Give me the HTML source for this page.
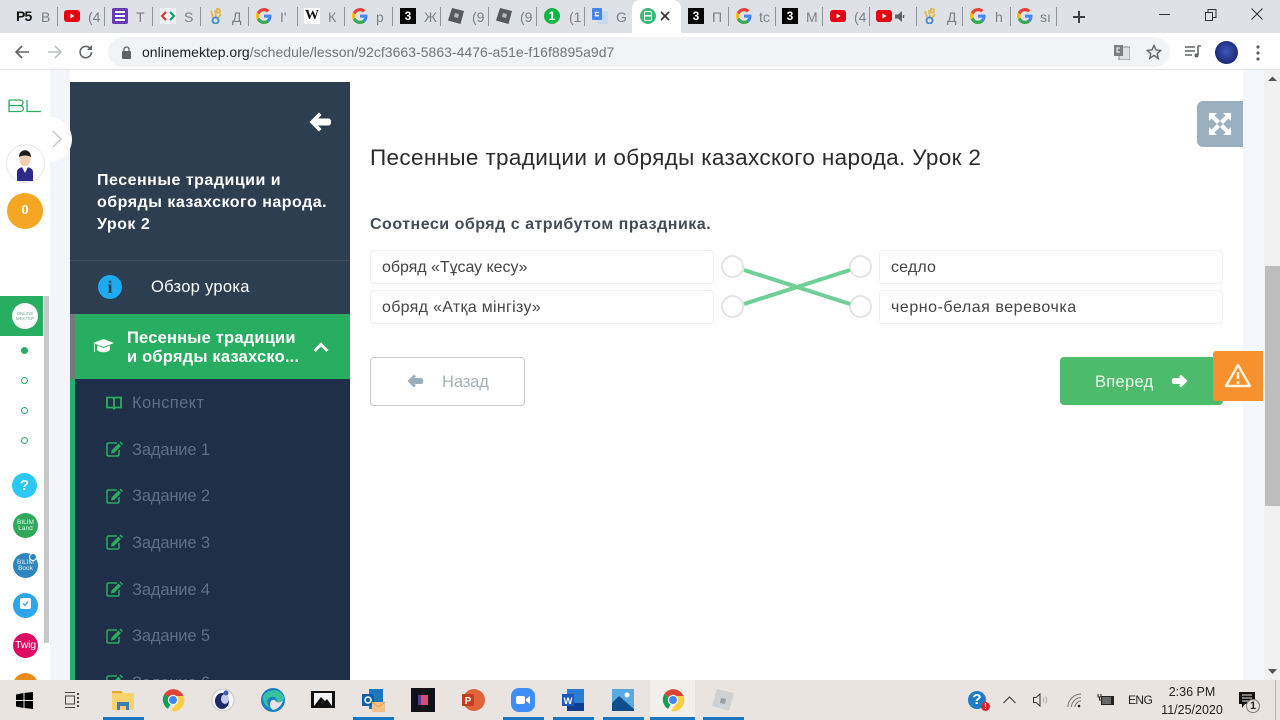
<!DOCTYPE html>
<html lang="ru"><head><meta charset="utf-8"><title>Урок</title>
<style>
html,body{margin:0;padding:0;width:1280px;height:720px;overflow:hidden;background:#fff}
body{position:relative;font-family:"Liberation Sans","Noto Sans CJK SC",sans-serif;color:#333}
.a{position:absolute;white-space:nowrap}
.r{position:absolute}
.sep{position:absolute;top:7px;width:1px;height:19px;background:#8f949a}
.tt{position:absolute;top:9px;font-size:14px;line-height:16px;color:#7b8086}
.fav{position:absolute;top:8px;width:16px;height:16px}
.b{position:absolute;background:#fff;border:1px solid #f0f0f0;border-radius:4px;box-sizing:border-box;height:34px;font-size:16px;line-height:33px;padding-left:11px;color:#444}
.m{position:absolute;left:132px;font-size:16.5px;line-height:20px;color:#5e6f85;letter-spacing:-.15px;white-space:nowrap}
.mi{position:absolute;left:105px;width:18px;height:16px}
.c{position:absolute;border-radius:50%}
.dot{position:absolute;left:21px;width:5px;height:5px;border:1px solid #27ae60;border-radius:50%;box-sizing:content-box}
.cir{position:absolute;width:19px;height:19px;border:2px solid #e4e4e4;border-radius:50%;background:#fff}
.u{position:absolute;top:717px;height:3px;background:#1a78c2}
.ti{position:absolute;top:688px;width:24px;height:24px}
</style></head><body>

<svg width="0" height="0" style="position:absolute">
<defs>
<symbol id="g" viewBox="0 0 16 16">
<path d="M15.5 8.2c0-.6-.05-1.1-.15-1.6H8v3h4.2c-.2 1-.75 1.8-1.6 2.35v2h2.6c1.5-1.4 2.3-3.4 2.3-5.75z" fill="#4285f4"/>
<path d="M8 16c2.15 0 4-.7 5.2-1.95l-2.6-2c-.7.5-1.6.75-2.6.75-2.05 0-3.8-1.4-4.4-3.25H.9v2.05C2.2 14.2 4.9 16 8 16z" fill="#34a853"/>
<path d="M3.6 9.55c-.3-.95-.3-2.15 0-3.1V4.4H.9c-1.2 2.3-1.2 4.9 0 7.2z" fill="#fbbc05"/>
<path d="M8 3.2c1.2 0 2.25.4 3.1 1.2l2.3-2.3C12 .8 10.15 0 8 0 4.9 0 2.2 1.8.9 4.4l2.7 2.05C4.2 4.6 5.95 3.2 8 3.2z" fill="#ea4335"/>
</symbol>
<symbol id="yt" viewBox="0 0 16 16"><rect x="0" y="2" width="16" height="12" rx="3" fill="#e60012"/><path d="M6.5 5.5l4 2.5-4 2.5z" fill="#fff"/></symbol>
<symbol id="rb" viewBox="0 0 16 16"><path d="M4 0l12 3-3.500 13L0 12.500z" fill="#565a5e"/><path d="M7 5l4 1-1 4-4-1z" fill="#b5b8ba"/></symbol>
<symbol id="dk" viewBox="0 0 16 16"><path d="M9 1c1-.5 3 0 3 2s-2 2-3 1zM3 3l2 6M7 2l1 7M13 6l-3 4" stroke="#e0b95a" stroke-width="2" fill="none"/><ellipse cx="7.500" cy="12.500" rx="3" ry="3" fill="none" stroke="#4a8fd0" stroke-width="2"/></symbol>
<symbol id="ch" viewBox="0 0 24 24">
<path d="M12 12L3.200 6.200A11 11 0 0 1 22.600 8H12z" fill="#db4437"/>
<path d="M12 12l-5 8.900A11 11 0 0 1 3.200 6.200z" fill="#0f9d58"/>
<path d="M12 8h10.600A11 11 0 0 1 10 23l6-8z" fill="#ffcd40"/>
<circle cx="12" cy="12" r="5.200" fill="#fff"/><circle cx="12" cy="12" r="4" fill="#4285f4"/>
</symbol>
<symbol id="ed" viewBox="0 0 18 16"><path d="M12 2H3.500C2.500 2 2 2.500 2 3.500v10c0 1 .5 1.500 1.500 1.500h9c1 0 1.500-.5 1.500-1.500V9" fill="none" stroke="#27ae60" stroke-width="1.500"/><path d="M6.500 9.500L13.500 2.500l2.500 2.500-7 7-3 .5zM14.500 1.500l1-1 2.500 2.500-1 1z" fill="#27ae60"/></symbol>
</defs>
</svg>

<!-- Tab strip -->
<div class="r" style="left:0;top:0;width:1280px;height:33px;background:#dee1e6"></div>
<div class="r" style="left:632px;top:0;width:49px;height:33px;background:#fff;border-radius:8px 8px 0 0"></div>

<div class="a" style="left:16px;top:8px;font-size:14px;line-height:17px;font-weight:bold;color:#111;letter-spacing:-.8px">P5</div><div class="tt" style="left:41px">В</div><div class="sep" style="left:57px"></div>
<svg class="fav" style="left:64px"><use href="#yt"/></svg><div class="tt" style="left:88px">(4</div><div class="sep" style="left:104px"></div>
<svg class="fav" style="left:112px" viewBox="0 0 16 16"><rect width="16" height="16" rx="2" fill="#673ab7"/><path d="M3 4h10M3 8h10M3 12h10" stroke="#fff" stroke-width="2"/></svg><div class="tt" style="left:136px">Т</div><div class="sep" style="left:152px"></div>
<svg class="fav" style="left:160px" viewBox="0 0 16 16"><rect width="16" height="16" fill="#eef0f2"/><path d="M6 4L2 8l4 4" stroke="#d93025" stroke-width="2" fill="none"/><path d="M10 4l4 4-4 4" stroke="#0f9d58" stroke-width="2" fill="none"/></svg><div class="tt" style="left:184px">S</div><div class="sep" style="left:200px"></div>
<svg class="fav" style="left:208px"><use href="#dk"/></svg><div class="tt" style="left:232px">Д</div><div class="sep" style="left:248px"></div>
<svg class="fav" style="left:256px"><use href="#g"/></svg><div class="tt" style="left:280px">I'</div><div class="sep" style="left:297px"></div>
<div class="a" style="left:304px;top:8px;width:16px;height:16px;background:#fff;font:bold 14px/16px 'Liberation Serif',serif;color:#111;text-align:center">W</div><div class="tt" style="left:328px">К</div><div class="sep" style="left:344px"></div>
<svg class="fav" style="left:352px"><use href="#g"/></svg><div class="tt" style="left:376px">р</div><div class="sep" style="left:392px"></div>
<div class="a" style="left:400px;top:8px;width:16px;height:16px;background:#000;color:#fff;font-size:12px;font-weight:bold;line-height:16px;text-align:center">3</div><div class="tt" style="left:424px">Ж</div><div class="sep" style="left:440px"></div>
<svg class="fav" style="left:448px"><use href="#rb"/></svg><div class="tt" style="left:472px">(9</div><div class="sep" style="left:488px"></div>
<svg class="fav" style="left:496px"><use href="#rb"/></svg><div class="tt" style="left:520px">(9</div><div class="sep" style="left:536px"></div>
<div class="a" style="left:544px;top:8px;width:16px;height:16px;border-radius:50%;background:#12b347;color:#fff;font-size:12px;font-weight:bold;line-height:16px;text-align:center">1</div><div class="tt" style="left:569px">(1</div><div class="sep" style="left:584px"></div>
<svg class="fav" style="left:592px" viewBox="0 0 16 16"><rect x="6" y="3" width="10" height="13" rx="1" fill="#c5d9f7"/><rect width="10" height="12" rx="1" fill="#4285f4"/><path d="M7 4.500H3.500v3.200H7" stroke="#fff" stroke-width="1.300" fill="none"/></svg><div class="tt" style="left:616px">G</div>

<div class="a" style="left:640px;top:8px;width:16px;height:16px;border-radius:50%;background:#3cb878"></div>
<div class="a" style="left:644px;top:11px;width:6px;height:8px;border:1.500px solid #fff;border-radius:2px;background:linear-gradient(#fff,#fff) center/100% 1.500px no-repeat"></div>
<svg class="r" style="left:660px;top:11px" width="10" height="10" viewBox="0 0 10 10"><path d="M1 1l8 8M9 1L1 9" stroke="#333" stroke-width="1.600"/></svg>

<div class="a" style="left:688px;top:8px;width:16px;height:16px;background:#000;color:#fff;font-size:12px;font-weight:bold;line-height:16px;text-align:center">3</div><div class="tt" style="left:712px">П</div><div class="sep" style="left:728px"></div>
<svg class="fav" style="left:736px"><use href="#g"/></svg><div class="tt" style="left:759px">tc</div><div class="sep" style="left:775px"></div>
<div class="a" style="left:782px;top:8px;width:16px;height:16px;background:#000;color:#fff;font-size:12px;font-weight:bold;line-height:16px;text-align:center">3</div><div class="tt" style="left:806px">М</div><div class="sep" style="left:822px"></div>
<svg class="fav" style="left:830px"><use href="#yt"/></svg><div class="tt" style="left:854px">(4</div><div class="sep" style="left:869px"></div>
<svg class="fav" style="left:876px"><use href="#yt"/></svg>
<svg class="r" style="left:895px;top:11px" width="12" height="11" viewBox="0 0 12 11"><path d="M0 3.500h3L7 0v11L3 7.500H0z" fill="#5f6368"/><path d="M8.500 4v3" stroke="#5f6368" stroke-width="1.400"/></svg>
<div class="sep" style="left:916px"></div>
<svg class="fav" style="left:922px"><use href="#dk"/></svg><div class="tt" style="left:947px">Д</div><div class="sep" style="left:962px"></div>
<svg class="fav" style="left:970px"><use href="#g"/></svg><div class="tt" style="left:995px">h</div><div class="sep" style="left:1010px"></div>
<svg class="fav" style="left:1017px"><use href="#g"/></svg><div class="tt" style="left:1040px">sı</div><div class="sep" style="left:1056px"></div>

<svg class="r" style="left:1072px;top:10px" width="14" height="14" viewBox="0 0 14 14"><path d="M7 1v12M1 7h12" stroke="#3c4043" stroke-width="2"/></svg>
<svg class="r" style="left:1159px;top:14px" width="12" height="2"><rect width="11" height="1" fill="#333"/></svg>
<svg class="r" style="left:1205px;top:9px" width="12" height="12" viewBox="0 0 12 12"><path d="M.5 3.500h7v8h-7zM3 3.500v-3h8v8H7.500" fill="none" stroke="#333"/></svg>
<svg class="r" style="left:1251px;top:8px" width="12" height="12" viewBox="0 0 12 12"><path d="M.5.500l11 11M11.500.500l-11 11" stroke="#333"/></svg>

<!-- Toolbar -->
<div class="r" style="left:0;top:33px;width:1280px;height:37px;background:#fff;border-bottom:1px solid #e6e6e6;box-sizing:border-box"></div>
<svg class="r" style="left:14px;top:44px" width="16" height="16" viewBox="0 0 16 16"><path d="M15 8H2M8 2L2 8l6 6" fill="none" stroke="#5f6368" stroke-width="1.600"/></svg>
<svg class="r" style="left:47px;top:44px" width="16" height="16" viewBox="0 0 16 16"><path d="M1 8h13M8 2l6 6-6 6" fill="none" stroke="#bcc0c4" stroke-width="1.600"/></svg>
<svg class="r" style="left:78px;top:44px" width="16" height="16" viewBox="0 0 16 16"><path d="M13.500 8a5.700 5.700 0 1 1-1.700-4" fill="none" stroke="#5f6368" stroke-width="1.600"/><path d="M14 1v5H9z" fill="#5f6368"/></svg>
<div class="r" style="left:108px;top:37px;width:1062px;height:30px;background:#f1f3f4;border-radius:15px"></div>
<svg class="r" style="left:121px;top:46px" width="11" height="13" viewBox="0 0 11 13"><rect x="1" y="5" width="9" height="8" rx="1" fill="#5f6368"/><path d="M3 5V3.500a2.500 2.500 0 0 1 5 0V5" fill="none" stroke="#5f6368" stroke-width="1.300"/></svg>
<div class="a" style="left:142px;top:44px;font-size:14px;line-height:17px;color:#70757a;letter-spacing:.02px"><span style="color:#202124">onlinemektep.org</span>/schedule/lesson/92cf3663-5863-4476-a51e-f16f8895a9d7</div>
<svg class="r" style="left:1114px;top:45px" width="16" height="15" viewBox="0 0 16 15"><rect x="5" y="2" width="11" height="13" fill="#e0e0e0" stroke="#8a8a8a"/><rect width="9" height="11" fill="#7c7f82"/><path d="M6 3H3v4h3" stroke="#fff" fill="none"/></svg>
<svg class="r" style="left:1146px;top:44px" width="16" height="16" viewBox="0 0 16 16"><path d="M8 1.500l2 4.400 4.700.5-3.500 3.200 1 4.700L8 11.400l-4.200 2.900 1-4.700L1.300 6.400 6 5.900z" fill="none" stroke="#5f6368" stroke-width="1.400"/></svg>
<svg class="r" style="left:1185px;top:45px" width="16" height="14" viewBox="0 0 16 14"><path d="M0 2h10M0 6h10M0 10h7" stroke="#5f6368" stroke-width="1.400"/><path d="M13 1v9" stroke="#5f6368" stroke-width="1.600"/><circle cx="11.500" cy="10.500" r="2" fill="#5f6368"/><path d="M13 1h3" stroke="#5f6368" stroke-width="1.400"/></svg>
<div class="c" style="left:1215px;top:41px;width:23px;height:23px;background:radial-gradient(circle at 50% 45%,#3f58b8,#1a2a78 70%)"></div>
<svg class="r" style="left:1256px;top:45px" width="4" height="16"><circle cx="2" cy="2" r="1.600" fill="#5f6368"/><circle cx="2" cy="8" r="1.600" fill="#5f6368"/><circle cx="2" cy="14" r="1.600" fill="#5f6368"/></svg>

<!-- Page background -->
<div class="r" style="left:50px;top:70px;width:20px;height:610px;background:#f3f5fa"></div>
<div class="r" style="left:1243px;top:70px;width:21px;height:610px;background:#f4f7fb"></div>
<div class="r" style="left:1264px;top:70px;width:16px;height:610px;background:#f1f1f1"></div>
<div class="r" style="left:1265px;top:266px;width:15px;height:240px;background:#bdbdbd"></div>
<svg class="r" style="left:1268px;top:76px" width="9" height="6"><path d="M0 5l4.500-4.500L9 5z" fill="#555"/></svg>
<svg class="r" style="left:1268px;top:669px" width="9" height="6"><path d="M0 0l4.500 5L9 0z" fill="#555"/></svg>

<!-- Left rail -->
<div class="r" style="left:44px;top:296px;width:5px;height:347px;background:#c9c9c9"></div>
<svg class="r" style="left:8px;top:98px" width="34" height="16" viewBox="0 0 34 16"><path d="M1 2h11c4 0 4 5.500 0 5.500H1m11 0c4.500 0 4.500 6 0 6H1V2M19 2v11.500h14" fill="none" stroke="#27ae60" stroke-width="1.300"/></svg>
<div class="c" style="left:7px;top:193px;width:36px;height:36px;background:#f5a623"></div>
<div class="a" style="left:7px;top:202px;width:36px;text-align:center;color:#fff;font-size:13px;line-height:16px;font-weight:bold">0</div>
<div class="r" style="left:0;top:296px;width:43px;height:40px;background:#27ae60"></div>
<div class="c" style="left:12px;top:303px;width:26px;height:26px;background:#fff"></div>
<div class="a" style="left:12px;top:311px;width:26px;text-align:center;font-size:4.500px;line-height:5px;color:#7a9;white-space:normal">ONLINE<br>MEKTEP</div>
<div class="c" style="left:21px;top:347px;width:7px;height:7px;background:#27ae60"></div>
<div class="dot" style="top:377px"></div><div class="dot" style="top:407px"></div><div class="dot" style="top:437px"></div>
<div class="c" style="left:12px;top:473px;width:25px;height:25px;background:#29c8f6"></div>
<div class="a" style="left:12px;top:477px;width:25px;text-align:center;color:#fff;font-size:15px;line-height:17px;font-weight:bold">?</div>
<div class="c" style="left:13px;top:513px;width:25px;height:25px;background:#2fa85c"></div>
<div class="a" style="left:13px;top:520px;width:25px;text-align:center;color:#e8f5ec;font-size:6.500px;line-height:6px">BILIM<br>Land</div>
<div class="c" style="left:13px;top:553px;width:25px;height:25px;background:#2f85bd"></div>
<div class="a" style="left:13px;top:560px;width:25px;text-align:center;color:#e8f2f8;font-size:6.500px;line-height:6px">BILIM<br>Book</div>
<div class="c" style="left:29px;top:553px;width:8px;height:8px;background:#2f85bd;border:1px solid #fff;box-sizing:border-box"></div>
<div class="c" style="left:13px;top:593px;width:25px;height:25px;background:#2da4ec"></div>
<div class="r" style="left:20px;top:598px;width:11px;height:11px;background:#fff;border-radius:2px"></div>
<svg class="r" style="left:22px;top:600px" width="7" height="7" viewBox="0 0 7 7"><path d="M1 3.500l2 2 3-4" fill="none" stroke="#2da4ec" stroke-width="1.300"/></svg>
<div class="c" style="left:13px;top:633px;width:25px;height:25px;background:#dd0b63"></div>
<div class="a" style="left:13px;top:640px;width:25px;text-align:center;color:#fff;font-size:10.500px;line-height:11px;letter-spacing:-.2px">Twig</div>
<div class="c" style="left:13px;top:673px;width:25px;height:25px;background:#ea8a1c"></div>

<!-- Dark panel -->
<div class="r" style="left:70px;top:82px;width:280px;height:232px;background:#2d3e50"></div>
<div class="r" style="left:70px;top:260px;width:280px;height:1px;background:#41505f"></div>
<svg class="r" style="left:309px;top:112px" width="23" height="20" viewBox="0 0 23 20"><path d="M10 .5L.5 10l9.500 9.500 2.500-2.500-3.500-3.500H19.500c3.500 0 3.500-7 0-7H9l3.500-3.500z" fill="#fff"/></svg>
<div class="a" style="left:97px;top:170px;font-size:16px;line-height:22px;font-weight:bold;color:#fff;letter-spacing:.5px">Песенные традиции и<br>обряды казахского народа.<br>Урок 2</div>
<div class="c" style="left:98px;top:275px;width:24px;height:24px;background:#1eaaf1"></div>
<div class="a" style="left:98px;top:277px;width:24px;text-align:center;font:bold 18px/20px 'Liberation Serif',serif;color:#2d3e50">i</div>
<div class="a" style="left:151px;top:277px;font-size:16.500px;line-height:20px;color:#fff;letter-spacing:.3px">Обзор урока</div>

<div class="r" style="left:70px;top:314px;width:280px;height:366px;background:#1e2f47"></div>
<div class="r" style="left:70px;top:314px;width:5px;height:65px;background:#6f7a83"></div>
<div class="r" style="left:70px;top:379px;width:5px;height:301px;background:#27ae60"></div>
<div class="r" style="left:75px;top:314px;width:275px;height:65px;background:#27ae60"></div>
<svg class="r" style="left:93px;top:338px" width="21" height="17" viewBox="0 0 21 17"><path d="M10.500 1L21 5 10.500 9 0 5z" fill="#fff"/><path d="M4.500 8v4c3 2.500 9 2.500 12 0V8l-6 2.500zM1.500 6v8" fill="#fff" stroke="#fff" stroke-width=".8"/></svg>
<div class="a" style="left:127px;top:329px;font-size:16.500px;line-height:18.500px;font-weight:bold;color:#fff;letter-spacing:.2px">Песенные традиции<br>и обряды казахско...</div>
<svg class="r" style="left:313px;top:342px" width="16" height="11" viewBox="0 0 16 11"><path d="M1.500 9L8 2.500 14.500 9" fill="none" stroke="#fff" stroke-width="3"/></svg>

<svg class="mi" style="top:395px" viewBox="0 0 18 16"><path d="M2 2.500h5c1.500 0 2 1 2 2v10c0-1-.5-2-2-2H2zM16 2.500h-5c-1.500 0-2 1-2 2v10c0-1 .5-2 2-2h5z" fill="none" stroke="#27ae60" stroke-width="1.800"/></svg>
<div class="m" style="top:393px;letter-spacing:.4px">Конспект</div>
<svg class="mi" style="top:441px"><use href="#ed"/></svg><div class="m" style="top:440px">Задание 1</div>
<svg class="mi" style="top:488px"><use href="#ed"/></svg><div class="m" style="top:486px">Задание 2</div>
<svg class="mi" style="top:534px"><use href="#ed"/></svg><div class="m" style="top:533px">Задание 3</div>
<svg class="mi" style="top:581px"><use href="#ed"/></svg><div class="m" style="top:580px">Задание 4</div>
<svg class="mi" style="top:628px"><use href="#ed"/></svg><div class="m" style="top:626px">Задание 5</div>
<svg class="mi" style="top:674px"><use href="#ed"/></svg><div class="m" style="top:673px">Задание 6</div>

<!-- Collapse button over rail and panel edge -->
<div class="c" style="left:27px;top:117px;width:45px;height:45px;background:#fff"></div>
<svg class="r" style="left:52px;top:130px" width="11" height="18" viewBox="0 0 11 18"><path d="M1 1l8 8-8 8" fill="none" stroke="#c4c8cc" stroke-width="1.500"/></svg>
<div class="c" style="left:6px;top:144px;width:39px;height:39px;background:#fff;border:1px solid #e8e8e8;box-sizing:border-box"></div>
<svg class="r" style="left:14px;top:149px" width="22" height="32" viewBox="0 0 22 32"><path d="M3 32v-9c0-3 3-5 8-5s8 2 8 5v9z" fill="#2d2a8c"/><path d="M8 18l3 6 3-6z" fill="#fff"/><ellipse cx="11" cy="10" rx="5.500" ry="7" fill="#f3cdb0"/><path d="M5 8c0-9 12-9 12 0-3-2-9-2-12 0z" fill="#1d1d1d"/></svg>

<!-- Content -->
<div class="a" style="left:370px;top:144px;font-size:22.500px;line-height:28px;color:#2b2b2b;letter-spacing:.35px">Песенные традиции и обряды казахского народа. Урок 2</div>
<div class="a" style="left:370px;top:215px;font-size:16px;line-height:20px;font-weight:bold;color:#444b54;letter-spacing:.5px">Соотнеси обряд с атрибутом праздника.</div>

<div class="b" style="left:370px;top:250px;width:344px;letter-spacing:-.04px">обряд «Тұсау кесу»</div>
<div class="b" style="left:370px;top:290px;width:344px;letter-spacing:.3px">обряд «Атқа мінгізу»</div>
<div class="b" style="left:879px;top:250px;width:344px;letter-spacing:.15px">седло</div>
<div class="b" style="left:879px;top:290px;width:344px;letter-spacing:.54px">черно-белая веревочка</div>

<div class="cir" style="left:721px;top:255px"></div>
<div class="cir" style="left:721px;top:295px"></div>
<div class="cir" style="left:849px;top:255px"></div>
<div class="cir" style="left:849px;top:295px"></div>
<svg class="r" style="left:700px;top:250px" width="180" height="70"><path d="M44 20L150 54M44 54L150 20" stroke="#6fcf97" stroke-width="4" fill="none"/></svg>

<div class="r" style="left:370px;top:357px;width:155px;height:49px;box-sizing:border-box;border:1px solid #c5cad0;border-radius:4px;background:#fff"></div>
<svg class="r" style="left:407px;top:374px" width="17" height="14" viewBox="0 0 17 14"><path d="M7 .5L.5 7 7 13.500l2-2L7.500 10H14c3 0 3-6 0-6H7.500L9 2.500z" fill="#9aaebd"/></svg>
<div class="a" style="left:442px;top:372px;font-size:16.500px;line-height:20px;color:#a5b1ba;letter-spacing:-.1px">Назад</div>

<div class="r" style="left:1060px;top:357px;width:163px;height:48px;background:#4cbb6c;border-radius:4px"></div>
<div class="a" style="left:1095px;top:372px;font-size:16.500px;line-height:20px;color:#e9f8ee;letter-spacing:.3px">Вперед</div>
<svg class="r" style="left:1171px;top:374px" width="17" height="14" viewBox="0 0 17 14"><path d="M10 .5L16.500 7 10 13.500l-2-2L9.500 10H3c-3 0-3-6 0-6h6.500L8 2.500z" fill="#fff"/></svg>

<div class="r" style="left:1213px;top:351px;width:50px;height:50px;background:#f5922e;border-radius:3px 0 0 3px"></div>
<svg class="r" style="left:1224px;top:363px" width="28" height="25" viewBox="0 0 28 25"><path d="M14 2L26 23H2z" fill="none" stroke="#fff3df" stroke-width="2.400" stroke-linejoin="round"/><path d="M14 9v7" stroke="#fff3df" stroke-width="2.600"/><circle cx="14" cy="19.500" r="1.500" fill="#fff3df"/></svg>

<div class="r" style="left:1197px;top:101px;width:46px;height:46px;background:#9ab0c1;border-radius:6px 0 0 6px"></div>
<svg class="r" style="left:1209px;top:113px" width="22" height="22" viewBox="0 0 22 22"><g fill="#fff"><path d="M0 0h8L5.500 2.500 11 8 8 11 2.500 5.500 0 8zM22 0v8l-2.500-2.500L14 11l-3-3 5.500-5.500L14 0zM0 22v-8l2.500 2.500L8 11l3 3-5.500 5.500L8 22zM22 22h-8l2.500-2.500L11 14l3-3 5.500 5.500L22 14z"/></g></svg>

<!-- Taskbar -->
<div class="r" style="left:0;top:680px;width:1280px;height:40px;background:#e9e4df"></div>
<div class="r" style="left:650px;top:680px;width:45px;height:40px;background:#f3f0ec"></div>
<svg class="r" style="left:16px;top:692px" width="17" height="17" viewBox="0 0 17 17"><path d="M0 2.500L7.500 1v7H0zM8.500.9L17 0v8H8.500zM0 9h7.500v7L0 14.500zM8.500 9H17v8l-8.500-1z" fill="#000"/></svg>
<svg class="r" style="left:64px;top:692px" width="16" height="16" viewBox="0 0 16 16"><path d="M1 .5h10M1 15.500h10" stroke="#444"/><rect x="1.500" y="4" width="9" height="8" fill="none" stroke="#444"/><path d="M14 1v2M14 5v2M14 9v2M14 13v2" stroke="#444" stroke-width="2"/></svg>
<svg class="ti" style="left:111px" viewBox="0 0 24 24"><path d="M1 3h9l2 2h-11z" fill="#e7a92b"/><rect x="1" y="5" width="22" height="17" fill="#fbd36b"/><path d="M6 22v-8h12v8h-3v-4H9v4z" fill="#3a7fb4"/></svg>
<svg class="ti" style="left:161px"><use href="#ch"/></svg>
<svg class="ti" style="left:211px" viewBox="0 0 24 24"><circle cx="12" cy="12" r="11" fill="#f6f7f9" stroke="#c4c8d0"/><ellipse cx="11" cy="13" rx="7" ry="8" fill="#1d2a66"/><ellipse cx="14" cy="11" rx="4" ry="5" fill="#c5cde6"/><circle cx="15" cy="5" r="2.500" fill="#3d5bb0"/></svg>
<svg class="ti" style="left:261px" viewBox="0 0 24 24"><circle cx="12" cy="12" r="12" fill="#1b7fc4"/><path d="M2 9C5 1 19-1 23 9c1 4-4 6-8 5 2-3-1-6-5-5-5 1-5 8 0 11-4 0-9-5-8-11z" fill="#37c1a0"/><path d="M10 13c2-2 5-1 5 1 3 1 6 0 7-2-1 5-5 9-10 10-3-2-4-6-2-9z" fill="#e9e4df"/></svg>
<svg class="r" style="left:311px;top:691px" width="24" height="17" viewBox="0 0 24 17"><rect width="24" height="17" fill="#111"/><rect x="3" y="2" width="18" height="13" fill="#f3f3f3"/><path d="M3 15l7-9 4 4 2-2 5 7z" fill="#111"/></svg>
<svg class="ti" style="left:361px" viewBox="0 0 24 24"><rect x="8" y="1" width="14" height="20" fill="#1a78c2"/><rect x="1" y="6" width="12" height="12" fill="#0f5fa8"/><circle cx="7" cy="12" r="3" fill="none" stroke="#fff" stroke-width="1.500"/><rect x="11" y="14" width="13" height="10" fill="#f3c18a"/><path d="M11 14l6.500 5 6.500-5" fill="none" stroke="#e89a4e"/></svg>
<svg class="ti" style="left:411px" viewBox="0 0 24 24"><rect width="24" height="24" fill="#101018"/><rect x="7" y="7" width="10" height="10" fill="#5b3a91"/><rect x="10" y="7" width="7" height="10" fill="#d94a7b"/></svg>
<svg class="ti" style="left:461px" viewBox="0 0 24 24"><circle cx="13" cy="12" r="11" fill="#e0633a"/><rect x="1" y="6" width="12" height="12" rx="1" fill="#c43e1c"/><text x="7" y="16" font-size="10" font-weight="bold" font-family="Liberation Sans" fill="#fff" text-anchor="middle">P</text></svg>
<svg class="ti" style="left:511px" viewBox="0 0 24 24"><rect width="24" height="24" rx="8" fill="#3d8df5"/><rect x="5" y="8" width="9" height="8" rx="2" fill="#fff"/><path d="M15 11l4-3v8l-4-3z" fill="#fff"/></svg>
<svg class="ti" style="left:561px" viewBox="0 0 24 24"><rect x="6" y="1" width="17" height="22" fill="#2b7cd3"/><rect x="6" y="15" width="17" height="8" fill="#103f91"/><rect x="1" y="6" width="12" height="12" fill="#185abd"/><text x="7" y="16" font-size="9.500" font-weight="bold" font-family="Liberation Sans" fill="#fff" text-anchor="middle">W</text></svg>
<svg class="ti" style="left:611px" viewBox="0 0 24 24"><rect x="1" y="1" width="22" height="22" fill="#5aa9e0"/><circle cx="16" cy="7" r="2.500" fill="#fff"/><path d="M1 23V15l7-7 15 13v2z" fill="#0d4f8b"/></svg>
<svg class="ti" style="left:661px"><use href="#ch"/></svg>
<svg class="ti" style="left:711px" viewBox="0 0 24 24"><path d="M6 1l17 4-5 18L1 18z" fill="#cfd2d4"/><path d="M10 10l5 1-1 5-5-1z" fill="#9ba0a3"/></svg>

<div class="u" style="left:103px;width:41px"></div>
<div class="u" style="left:353px;width:41px"></div>
<div class="u" style="left:503px;width:41px"></div>
<div class="u" style="left:553px;width:41px"></div>
<div class="u" style="left:603px;width:41px"></div>
<div class="u" style="left:650px;width:45px"></div>
<div class="u" style="left:703px;width:41px"></div>

<div class="c" style="left:968px;top:691px;width:18px;height:18px;background:#1d7cc4"></div>
<div class="a" style="left:968px;top:691px;width:18px;text-align:center;color:#fff;font-size:15px;line-height:18px;font-weight:bold">?</div>
<div class="c" style="left:981px;top:702px;width:9px;height:9px;background:#d8232a"></div>
<div class="a" style="left:981px;top:702px;width:9px;text-align:center;color:#fff;font-size:8px;line-height:9px;font-weight:bold">!</div>
<svg class="r" style="left:1003px;top:696px" width="13" height="8" viewBox="0 0 13 8"><path d="M.5 7l6-6 6 6" fill="none" stroke="#333"/></svg>
<svg class="r" style="left:1033px;top:693px" width="16" height="14" viewBox="0 0 16 14"><path d="M.5 4.500h2.500L7 1v12L3 9.500H.5z" fill="none" stroke="#333"/><path d="M10 5c1 1 1 3 0 4M12.500 3.500c1.500 2 1.500 5 0 7" fill="none" stroke="#aaa"/></svg>
<svg class="r" style="left:1067px;top:693px" width="15" height="15" viewBox="0 0 15 15"><path d="M1 14C1 7 7 1 14 1M4.500 14c0-5 4.500-9.500 9.500-9.500M8 14c0-3 3-6 6-6" fill="none" stroke="#777"/><circle cx="12" cy="13" r="1.300" fill="#222"/></svg>
<svg class="r" style="left:1097px;top:693px" width="17" height="13" viewBox="0 0 17 13"><rect x="4" y="3" width="13" height="9" fill="#222"/><rect x="5" y="4" width="9" height="7" fill="#666"/><path d="M1 1v3h3V1M2.500 4v3h2" fill="none" stroke="#222"/></svg>
<div class="a" style="left:1128px;top:692px;font-size:12px;line-height:16px;color:#222;letter-spacing:-.6px">ENG</div>
<div class="a" style="left:1158px;top:683px;width:68px;text-align:center;font-size:12.500px;line-height:18px;color:#222;white-space:normal">2:36 PM<br>11/25/2020</div>
<svg class="r" style="left:1238px;top:691px" width="26" height="24" viewBox="0 0 26 24"><path d="M1 1h16v12H7l-3 4v-4H1z" fill="#111"/><path d="M4 4h10M4 7h10M4 10h7" stroke="#e9e4df"/><circle cx="15" cy="15" r="6.500" fill="#e9e4df" stroke="#777"/></svg>
<div class="a" style="left:1246px;top:700px;width:14px;text-align:center;font-size:11px;line-height:13px;font-weight:bold;color:#222">1</div>
<div class="r" style="left:1275px;top:680px;width:1px;height:40px;background:#b8b4af"></div>

</body></html>
